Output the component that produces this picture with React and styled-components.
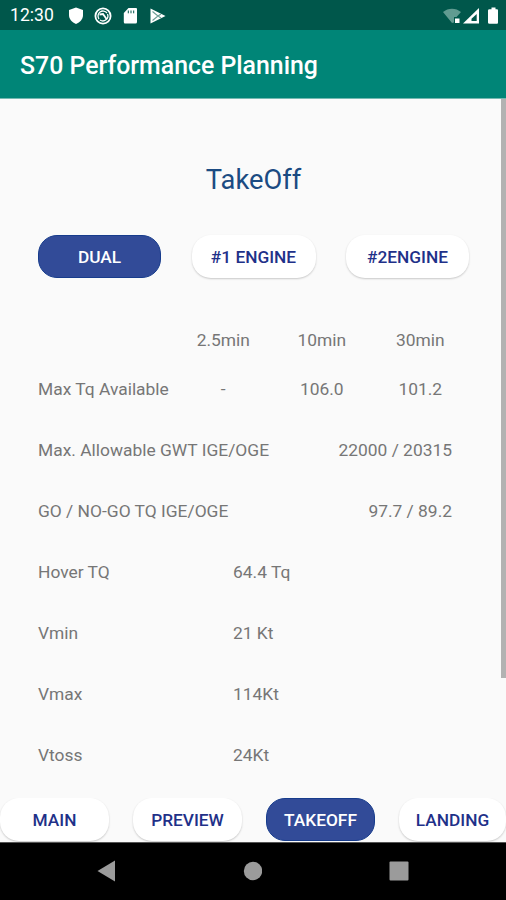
import styled, { createGlobalStyle } from 'styled-components';

const GlobalStyle = createGlobalStyle`
  * {
    box-sizing: border-box;
  }
  body {
    margin: 0;
    font-family: Roboto, sans-serif;
  }
`;

const Screen = styled.div`
  width: 506px;
  height: 900px;
  display: flex;
  flex-direction: column;
  overflow: hidden;
  background-color: #fafafa;
`;

const StatusBar = styled.div`
  height: 30px;
  flex: none;
  display: flex;
  align-items: center;
  justify-content: space-between;
  padding: 1px 7px 0 10px;
  background-color: #00574b;
  color: #ffffff;
`;

const Clock = styled.span`
  width: 56px;
  font-size: 17.6px;
  line-height: 29px;
`;

const StatusGroup = styled.div`
  display: flex;
  align-items: center;
`;

const AppBar = styled.header`
  height: 69px;
  flex: none;
  display: flex;
  align-items: center;
  padding: 3px 20px 0;
  background-color: #008577;
  border-bottom: 1px solid #74b9b1;
`;

const AppTitle = styled.h1`
  margin: 0;
  color: #ffffff;
  font-size: 24.85px;
  font-weight: 500;
`;

const Body = styled.div`
  flex: 1;
  min-height: 0;
  display: flex;
  justify-content: space-between;
`;

const Content = styled.main`
  width: 470px;
  padding: 62px 0 0 38px;
`;

const ScrollThumb = styled.div`
  width: 5px;
  height: 579px;
  background-color: #b2b2b2;
`;

const PageTitle = styled.h2`
  margin: 0 0 36px;
  width: 431px;
  color: #1b4b82;
  font-size: 27.3px;
  font-weight: 400;
  line-height: 38px;
  text-align: center;
`;

const EngineTabs = styled.div`
  display: flex;
  justify-content: space-between;
  width: 431px;
`;

const Pill = styled.button`
  width: ${({ $width }) => $width}px;
  height: 43px;
  flex: none;
  padding: 1px 0 0;
  border: ${({ $active }) => ($active ? '1px solid #173c8c' : 'none')};
  border-radius: 19px;
  background-color: ${({ $active }) => ($active ? '#324b98' : '#ffffff')};
  box-shadow: ${({ $active }) => ($active ? 'none' : '0 1px 2px rgba(0, 0, 0, 0.2)')};
  color: ${({ $active }) => ($active ? '#ffffff' : '#1f3189')};
  font-family: Roboto, sans-serif;
  font-size: 17.3px;
  font-weight: 500;
`;

const Table = styled.div`
  padding-top: 37px;
  color: #767676;
  font-size: 17.4px;
`;

const TimeRows = styled.div`
  padding-bottom: 6px;
`;

const Row = styled.div`
  height: ${({ $height }) => $height || 61}px;
  display: grid;
  grid-template-columns: ${({ $columns }) => $columns};
  align-items: center;
`;

const Cell = styled.span`
  white-space: nowrap;
  text-align: ${({ $align }) => $align || 'left'};
`;

const BottomTabs = styled.nav`
  height: 44px;
  flex: none;
  display: flex;
  justify-content: space-between;
  overflow: hidden;
`;

const SystemNav = styled.div`
  height: 58px;
  flex: none;
  display: flex;
  align-items: center;
  justify-content: space-between;
  padding: 0 97px 1px;
  background-color: #000000;
  border-top: 1px solid #555555;
`;

const TIMES = '136px repeat(3, 98.5px)';
const PAIR = '1fr auto 18px';
const SINGLE = '195px 1fr';

const pairs = [
  ['Max. Allowable GWT IGE/OGE', '22000 / 20315'],
  ['GO / NO-GO TQ IGE/OGE', '97.7 / 89.2'],
];

const singles = [
  ['Hover TQ', '64.4 Tq'],
  ['Vmin', '21 Kt'],
  ['Vmax', '114Kt'],
  ['Vtoss', '24Kt'],
];

const StatusIcons = () => (
  <svg width="100" height="20" viewBox="0 0 100 20">
    <path d="M10 1.5 L17 4 V9 C17 13 14 16.5 10 18 C6 16.5 3 13 3 9 V4 Z" fill="#fff" />
    <circle cx="37" cy="10" r="7.6" fill="none" stroke="#fff" strokeWidth="1.8" />
    <path d="M33 13 A5 5 0 0 1 34 6 A5 5 0 0 1 41 7 M41.5 8 A5 5 0 0 1 40 13.8 A5 5 0 0 1 34 14" fill="none" stroke="#fff" strokeWidth="1.3" />
    <path d="M33.5 8.5 L37 8 L40.5 13" fill="none" stroke="#fff" strokeWidth="1.8" />
    <path d="M62.5 2 H70 Q71 2 71 3 V16 Q71 17.5 69.5 17.5 H59 Q57.8 17.5 57.8 16 V7 Z" fill="#fff" />
    <path d="M62.3 4.5 V7.3 M65 4.5 V7.3 M67.7 4.5 V7.3" stroke="#00574b" strokeWidth="1" />
    <path d="M84.5 2.5 L99.5 10 L84.5 17.5 Z" fill="#fff" />
    <path d="M86.5 5.5 L92 10 L86.5 14.5 M92 10 L95 8 M92 10 L95 12" fill="none" stroke="#6c9d95" strokeWidth="1.1" />
  </svg>
);

const SignalIcons = () => (
  <svg width="56" height="20" viewBox="1 0 56 20">
    <path d="M1 6 C6 1.5 14 1.5 19 6 L14.5 11 H12 V16.5 L10 17 Z" fill="#609b91" />
    <rect x="13" y="12.5" width="4.5" height="4.5" fill="#fff" />
    <path d="M37 2 V17.5 H21 Z" fill="#fff" />
    <path d="M34.7 8 V15 H29.5 V12.8 Z" fill="#00574b" />
    <path d="M49.5 1.5 H53.5 V3.3 H55 Q56 3.3 56 4.5 V16.5 Q56 17.7 55 17.7 H47.5 Q46 17.7 46 16.5 V4.5 Q46 3.3 47.5 3.3 H49.5 Z" fill="#fff" />
  </svg>
);

const App = () => {
  return (
    <>
      <GlobalStyle />
      <Screen>
        <StatusBar>
          <StatusGroup>
            <Clock>12:30</Clock>
            <StatusIcons />
          </StatusGroup>
          <SignalIcons />
        </StatusBar>
        <AppBar>
          <AppTitle>S70 Performance Planning</AppTitle>
        </AppBar>
        <Body>
          <Content>
            <PageTitle>TakeOff</PageTitle>
            <EngineTabs>
              <Pill $width={123} $active>DUAL</Pill>
              <Pill $width={124}>#1 ENGINE</Pill>
              <Pill $width={123}>#2ENGINE</Pill>
            </EngineTabs>
            <Table>
              <TimeRows>
                <Row $columns={TIMES} $height={49}>
                  <Cell />
                  <Cell $align="center">2.5min</Cell>
                  <Cell $align="center">10min</Cell>
                  <Cell $align="center">30min</Cell>
                </Row>
                <Row $columns={TIMES} $height={49}>
                  <Cell>Max Tq Available</Cell>
                  <Cell $align="center">-</Cell>
                  <Cell $align="center">106.0</Cell>
                  <Cell $align="center">101.2</Cell>
                </Row>
              </TimeRows>
              {pairs.map(([label, value]) => (
                <Row key={label} $columns={PAIR}>
                  <Cell>{label}</Cell>
                  <Cell>{value}</Cell>
                </Row>
              ))}
              {singles.map(([label, value]) => (
                <Row key={label} $columns={SINGLE}>
                  <Cell>{label}</Cell>
                  <Cell>{value}</Cell>
                </Row>
              ))}
            </Table>
          </Content>
          <ScrollThumb />
        </Body>
        <BottomTabs>
          <Pill $width={109}>MAIN</Pill>
          <Pill $width={109}>PREVIEW</Pill>
          <Pill $width={109} $active>TAKEOFF</Pill>
          <Pill $width={107}>LANDING</Pill>
        </BottomTabs>
        <SystemNav>
          <svg width="18" height="22" viewBox="0 0 18 22">
            <path d="M18 0.5 V21.5 L0.5 11 Z" fill="#9b9b9b" />
          </svg>
          <svg width="20" height="20" viewBox="0 0 20 20">
            <circle cx="11" cy="10" r="9.2" fill="#9b9b9b" />
          </svg>
          <svg width="20" height="20" viewBox="0 0 20 20">
            <rect x="0.5" y="0.5" width="19" height="19" rx="1" fill="#9b9b9b" />
          </svg>
        </SystemNav>
      </Screen>
    </>
  );
};

export default App;
